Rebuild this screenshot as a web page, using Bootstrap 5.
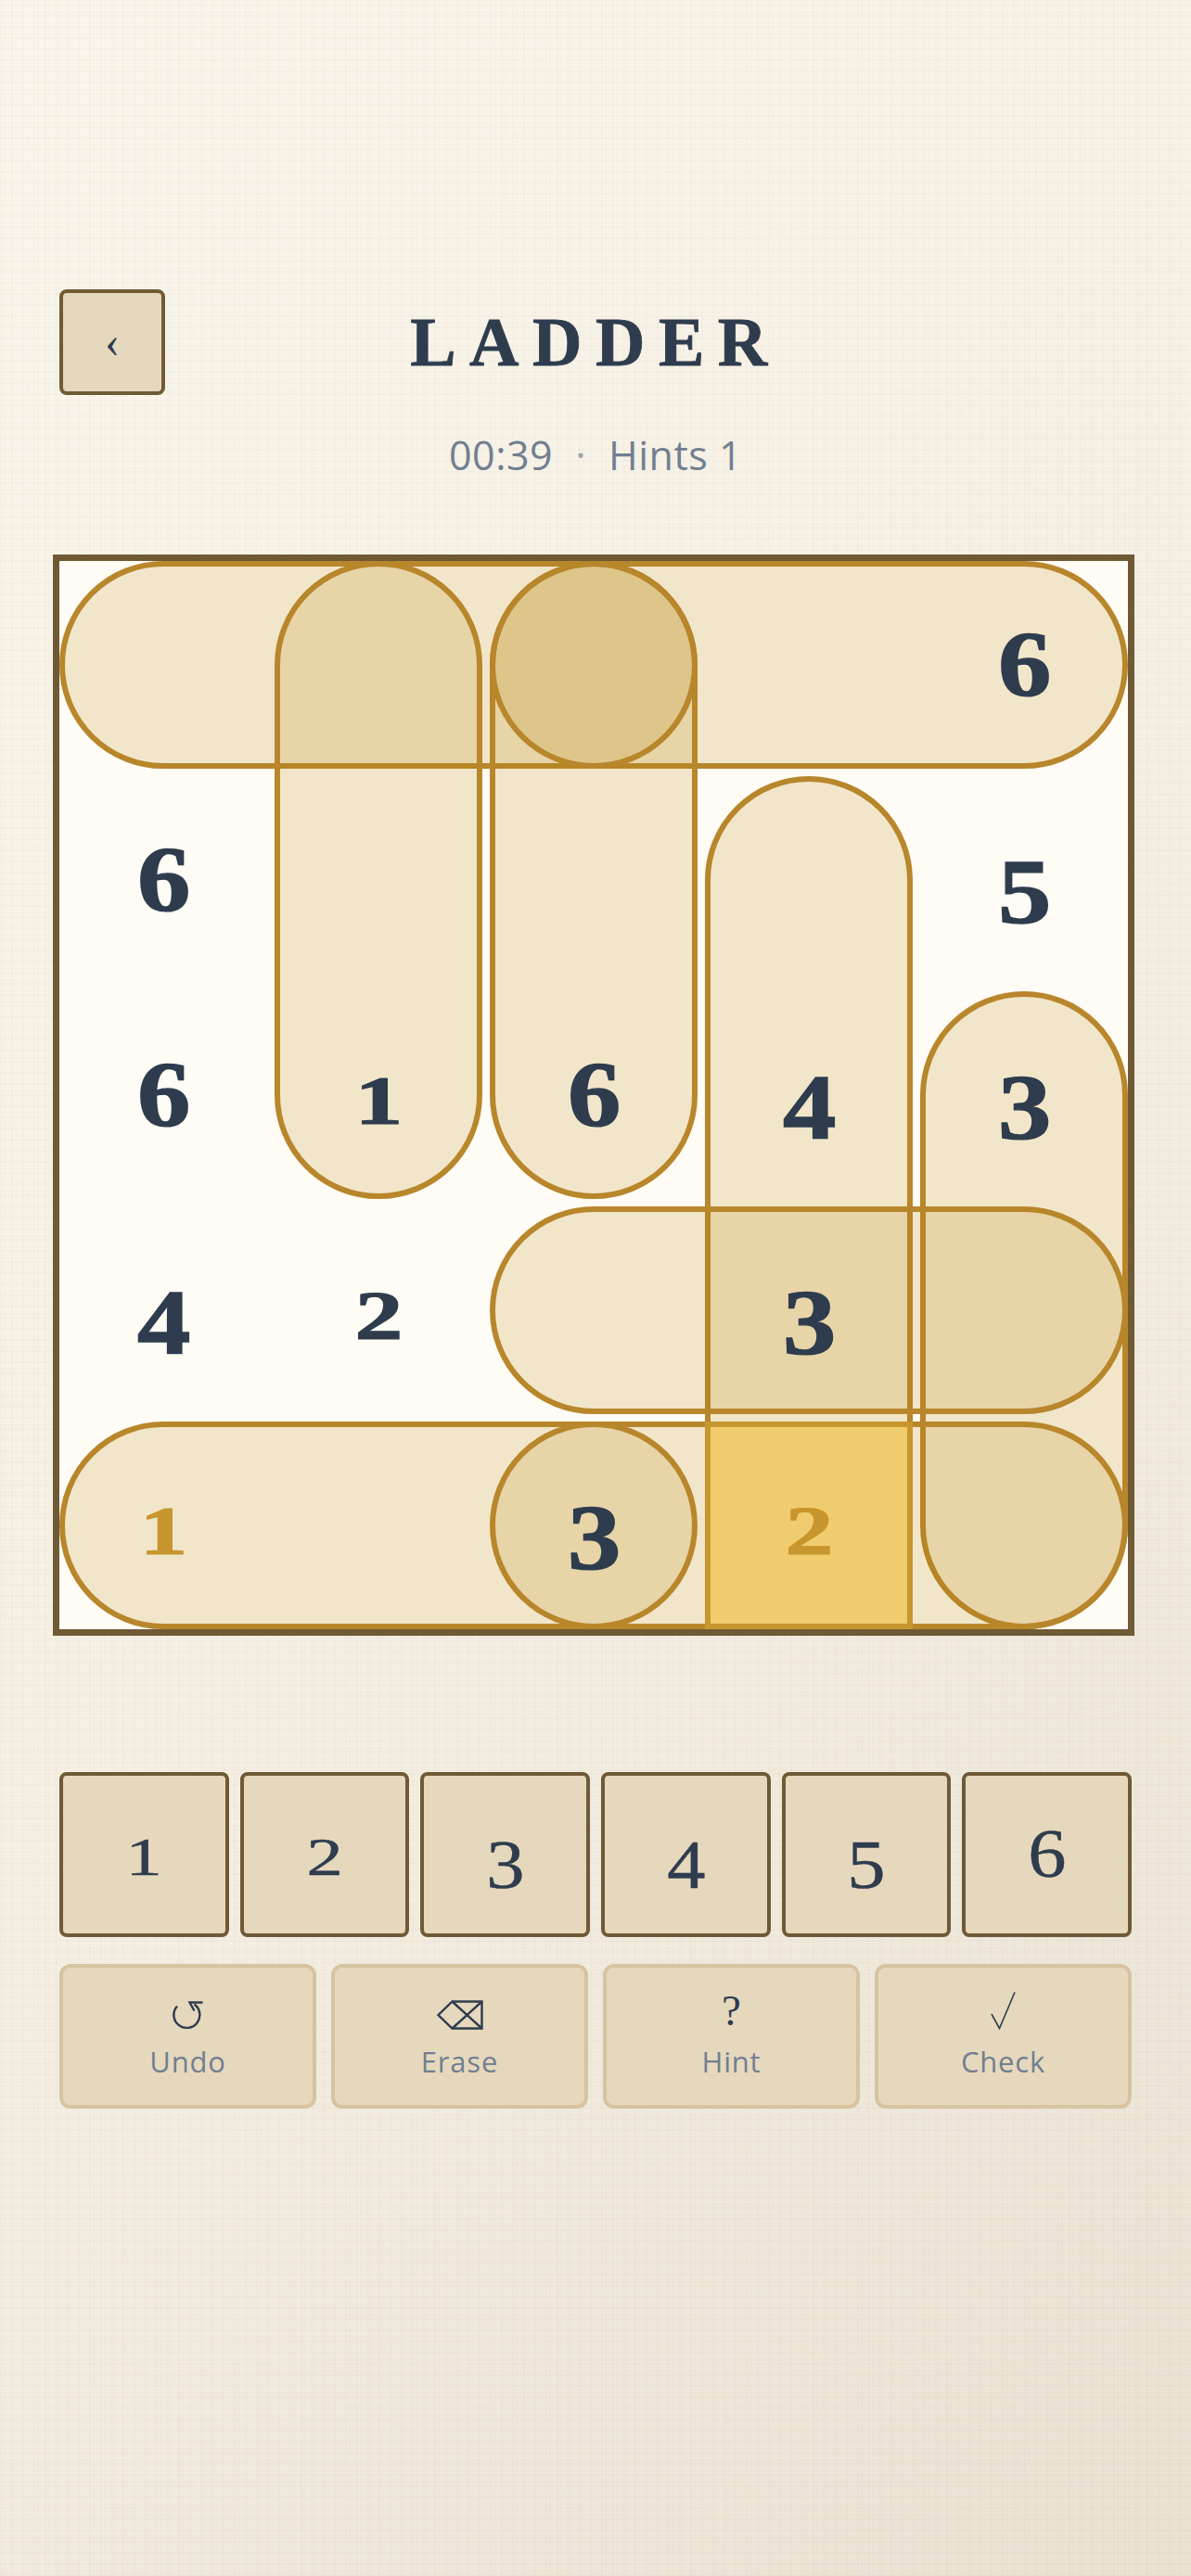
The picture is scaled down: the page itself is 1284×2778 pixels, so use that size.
<!DOCTYPE html>
<html lang="en">
<head>
<meta charset="utf-8">
<title>Ladder</title>
<link href="https://cdn.jsdelivr.net/npm/bootstrap@5.3.0/dist/css/bootstrap.min.css" rel="stylesheet">
<style>
html, body { height: 100%; }
body {
  min-height: 2778px;
  font-family: "Open Sans", "Noto Sans", sans-serif;
  color: #2e3c4e;
  background-color: #f5efe3;
  background-image:
    repeating-linear-gradient(0deg, rgba(139,115,85,.03) 0 2px, transparent 2px 4px, rgba(139,115,85,.015) 4px 6px, transparent 6px 12px),
    repeating-linear-gradient(90deg, rgba(139,115,85,.03) 0 2px, transparent 2px 4px, rgba(139,115,85,.015) 4px 6px, transparent 6px 12px),
    linear-gradient(135deg, #faf6ec 0%, #f6f0e4 50%, #e9e2d5 100%);
}
.game { padding: 312px 64px 0; }
.back-btn {
  width: 114px; height: 114px; padding: 0;
  background: #e6d8bd; border: 4px solid #705a36; border-radius: 8px;
  color: #2e3c4e; font: 400 48px/1 "Liberation Serif", serif;
}
.back-btn:hover, .back-btn:active { background: #e6d8bd !important; border-color: #705a36 !important; color: #2e3c4e !important; }
.spacer { width: 114px; }
.game-title {
  margin: 0; color: #2e3c4e;
  font: 700 74px/1 "Liberation Serif", serif; letter-spacing: 14.5px;
  -webkit-text-stroke: .8px currentColor;
}
.game-sub {
  margin-top: 36px; color: #717f90; text-align: center;
  font-size: 43px; line-height: 58px; font-weight: 400; letter-spacing: .5px;
}
.game-sub i { font-style: normal; color: #9aa5b1; margin: 0 24px; }
.board {
  width: 1166px; height: 1166px; margin: 77.5px 0 0 -6.7px;
  background: #fffcf5; border: 7px solid #6f5a35;
  display: grid; gap: 8px;
  grid-template-columns: repeat(5, 224px);
  grid-template-rows: repeat(5, 224px);
}
.pill {
  border: 6px solid #b8862b; border-radius: 112px;
  background: rgba(184,134,11,.18);
}
.picked { background: #f0cc6e; border: 6px solid #c8962e; }
.r1 { grid-row-start: 1; } .r2 { grid-row-start: 2; } .r3 { grid-row-start: 3; } .r4 { grid-row-start: 4; } .r5 { grid-row-start: 5; }
.c1 { grid-column-start: 1; } .c2 { grid-column-start: 2; } .c3 { grid-column-start: 3; } .c4 { grid-column-start: 4; } .c5 { grid-column-start: 5; }
.across3 { grid-column-end: span 3; } .across5 { grid-column-end: span 5; }
.down3 { grid-row-end: span 3; } .down4 { grid-row-end: span 4; }
.num { display: flex; align-items: center; justify-content: center; color: #2e3c4e; font-family: "Liberation Serif", serif; font-weight: 700; z-index: 1; }
.num.given { color: #c8962e; }
.num span { display: block; line-height: 1; }
.n-tall { padding-bottom: 3px; }
.n-tall span { font-size: 99px; transform: scaleX(1.16); -webkit-text-stroke: 1.4px currentColor; }
.num.n-low { padding-top: 25px; padding-bottom: 0; }
.n-small { padding-top: 12px; }
.n-small span { font-size: 74px; transform: scaleX(1.4); -webkit-text-stroke: 1.2px currentColor; }
.keypad { margin-top: 147px; display: grid; gap: 12px; grid-template-columns: repeat(6, 1fr); }
.key {
  height: 178px; padding: 0; background: #e6d8bd; border: 4px solid #705a36; border-radius: 8px;
  color: #2e3c4e; font-family: "Liberation Serif", serif; font-weight: 400;
  display: flex; align-items: center; justify-content: center;
}
.key:hover, .key:active { background: #e6d8bd !important; border-color: #705a36 !important; color: #2e3c4e !important; }
.key span { display: block; line-height: 1; }
.k-tall span { font-size: 75px; transform: scaleX(1.1); -webkit-text-stroke: .5px currentColor; }
.k-low { padding-top: 22px; }
.k-high { padding-bottom: 2px; }
.k-small { padding-top: 6px; }
.k-small span { font-size: 56px; transform: scaleX(1.4); -webkit-text-stroke: .5px currentColor; }
.actions { margin-top: 29px; display: grid; gap: 16px; grid-template-columns: repeat(4, 1fr); }
.act {
  height: 156px; padding: 0; background: #e6d8bd; border: 4px solid #d6c4a0; border-radius: 12px;
  display: flex; flex-direction: column; align-items: center; justify-content: center;
}
.act:hover, .act:active { background: #e6d8bd !important; border-color: #d6c4a0 !important; }
.glyph { display: flex; align-items: flex-end; justify-content: center; height: 42px; color: #2e3c4e; font: 400 47px/42px "Liberation Serif", serif; }
.glyph svg { display: block; fill: none; stroke: #2e3c4e; }
.act small { display: block; margin-top: 12px; font-size: 31px; line-height: 44px; color: #717f90; letter-spacing: .8px; font-weight: 400; }
</style>
</head>
<body>
<main class="game">
  <header class="d-flex align-items-center justify-content-between">
    <button type="button" class="btn back-btn">‹</button>
    <h1 class="game-title">LADDER</h1>
    <div class="spacer"></div>
  </header>
  <div class="game-sub">00:39<i>·</i>Hints 1</div>

  <section class="board">
    <div class="pill r1 c1 across5"></div>
    <div class="pill r1 c2 down3"></div>
    <div class="pill r1 c3 down3"></div>
    <div class="pill r1 c3"></div>
    <div class="pill r2 c4 down4"></div>
    <div class="pill r3 c5 down3"></div>
    <div class="pill r4 c3 across3"></div>
    <div class="pill r5 c1 across5"></div>
    <div class="pill r5 c3"></div>
    <div class="picked r5 c4"></div>

    <div class="num n-tall r1 c5"><span>6</span></div>
    <div class="num n-tall r2 c1"><span>6</span></div>
    <div class="num n-tall n-low r2 c5"><span>5</span></div>
    <div class="num n-tall r3 c1"><span>6</span></div>
    <div class="num n-small r3 c2"><span>1</span></div>
    <div class="num n-tall r3 c3"><span>6</span></div>
    <div class="num n-tall n-low r3 c4"><span>4</span></div>
    <div class="num n-tall n-low r3 c5"><span>3</span></div>
    <div class="num n-tall n-low r4 c1"><span>4</span></div>
    <div class="num n-small r4 c2"><span>2</span></div>
    <div class="num n-tall n-low r4 c4"><span>3</span></div>
    <div class="num n-small given r5 c1"><span>1</span></div>
    <div class="num n-tall n-low r5 c3"><span>3</span></div>
    <div class="num n-small given r5 c4"><span>2</span></div>
  </section>

  <section class="keypad">
    <button type="button" class="btn key k-small"><span>1</span></button>
    <button type="button" class="btn key k-small"><span>2</span></button>
    <button type="button" class="btn key k-tall k-low"><span>3</span></button>
    <button type="button" class="btn key k-tall k-low"><span>4</span></button>
    <button type="button" class="btn key k-tall k-low"><span>5</span></button>
    <button type="button" class="btn key k-tall k-high"><span>6</span></button>
  </section>

  <section class="actions">
    <button type="button" class="btn act">
      <span class="glyph"><svg width="34" height="31" viewBox="0 0 34 31" stroke-width="2.4" aria-hidden="true"><path d="M5 5.5A14 14 0 1 0 23.5 3.5"/><path d="M32.5 1.5H18.5L23.5 10.5"/></svg></span>
      <small>Undo</small>
    </button>
    <button type="button" class="btn act">
      <span class="glyph"><svg width="50" height="32" viewBox="0 0 50 32" stroke-width="2.4" aria-hidden="true"><path d="M1.5 16 16.500 1.500H48.500V30.500H16.500Z"/><path d="M16.500 1.500 48.500 30.500M48.500 1.500 16.500 30.500"/></svg></span>
      <small>Erase</small>
    </button>
    <button type="button" class="btn act"><span class="glyph">?</span><small>Hint</small></button>
    <button type="button" class="btn act"><span class="glyph"><svg width="27" height="41" viewBox="0 0 27 41" stroke-width="1.6" aria-hidden="true"><path d="M1 24 9.500 39.500 26 .5"/></svg></span><small>Check</small></button>
  </section>
</main>
<script src="https://cdn.jsdelivr.net/npm/bootstrap@5.3.0/dist/js/bootstrap.bundle.min.js"></script>
</body>
</html>
